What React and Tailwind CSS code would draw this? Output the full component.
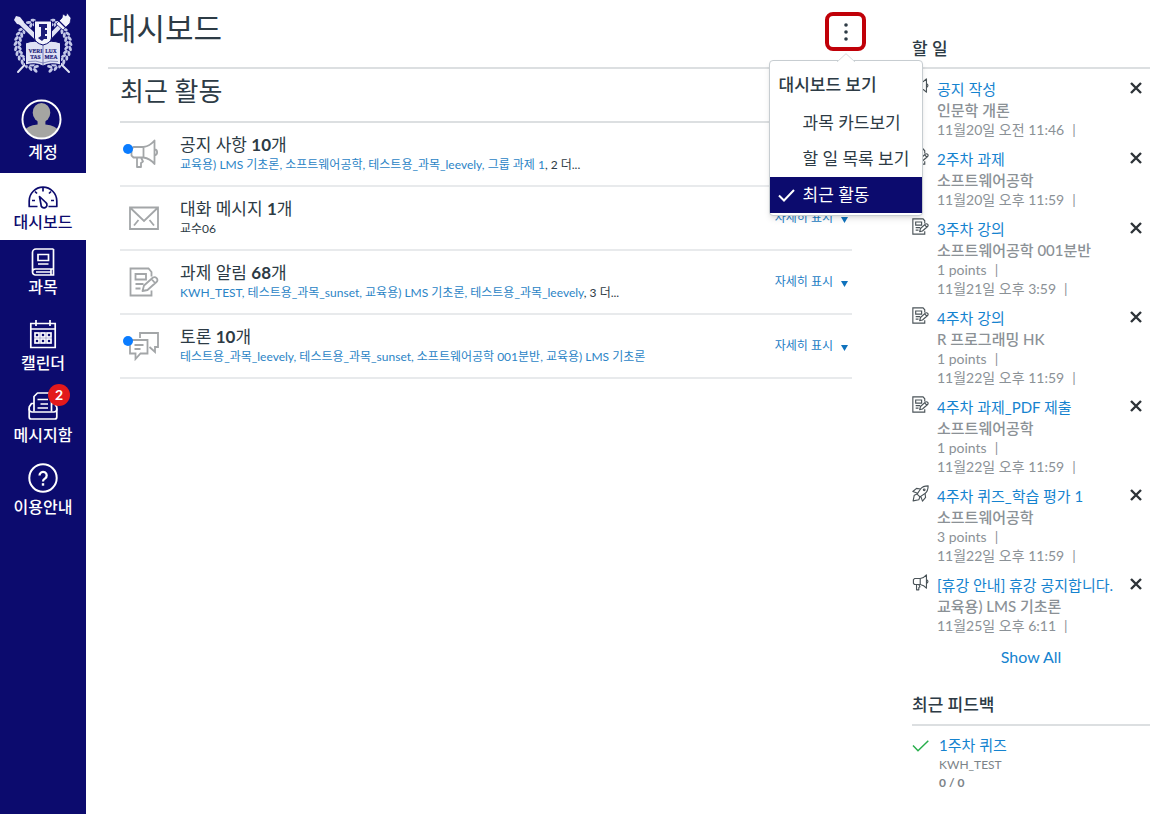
import { useState } from "react";

const navItem = "flex flex-col items-center text-base leading-5 font-medium";

function Logo() {
  const leaves = [];
  for (let i = 0; i < 14; i++) {
    const deg = 104 + i * 11;
    const a = (deg * Math.PI) / 180;
    [1, -1].forEach((s) => {
      const x = 30 + s * Math.cos(a) * 25.5;
      const y = 32 + Math.sin(a) * 24.5;
      const r = s === 1 ? deg + 90 : -(deg + 90);
      leaves.push(
        <g key={i + "_" + s} transform={`translate(${x} ${y}) rotate(${r})`}>
          <ellipse cx="0" cy="-2.2" rx="2.8" ry="1.5" transform={`rotate(${s * 30})`} />
          <ellipse cx="0" cy="2.2" rx="2.8" ry="1.5" transform={`rotate(${s * -30})`} />
        </g>
      );
    });
  }
  return (
    <svg viewBox="0 0 60 62" className="h-[62px] w-[60px]" role="img" aria-label="서울대학교">
      <g fill="#c3c8e8">{leaves}</g>
      <g strokeLinecap="round">
        <path d="M7 9 L30 31 M50 10 L30 31" stroke="#0c0b6e" strokeWidth="6.500" />
        <path d="M7 9 L30 31 M50 10 L30 31" stroke="#dfe2f4" strokeWidth="4.500" />
        <path d="M16 47 L5 59 M44 47 L56 59" stroke="#dfe2f4" strokeWidth="2" />
      </g>
      <path d="M1 7 L3 3 L7 4 L11 9 L9 12 L4 11 Z" fill="#e6e8f7" />
      <path d="M43 11 L49 5 L50 1 L53 3 L54 0 L58 5 L57 10 L50 17 Z" fill="#f4f5fc" stroke="#0c0b6e" strokeWidth="0.7" />
      <path d="M46 8 L53 15" stroke="#0c0b6e" strokeWidth="1.200" />
      <path d="M12.500 30 Q22 26.500 30 30 Q38 26.500 47.500 30 V52 Q38 49 30 53 Q22 49 12.500 52 Z" fill="#dfe2f4" stroke="#0c0b6e" strokeWidth="1" />
      <path d="M15 48.500 Q23 47 30 50 Q37 47 45 48.500" fill="none" stroke="#7478b4" strokeWidth="0.8" />
      <path d="M30 31 V52" stroke="#5b5fa6" strokeWidth="0.8" />
      <g fontSize="5.500" fontWeight="700" fill="#23237c" stroke="#23237c" strokeWidth="0.2" fontFamily="Liberation Serif">
        <text x="22.500" y="39.500" textAnchor="middle">VERI</text>
        <text x="38" y="39.500" textAnchor="middle">LUX</text>
        <text x="22.500" y="45.500" textAnchor="middle">TAS</text>
        <text x="38" y="45.500" textAnchor="middle">MEA</text>
      </g>
      <path d="M21.500 8 H38.500 V25 Q38 30 30 32 Q22 30 21.500 25 Z" fill="#f3f4fc" stroke="#0c0b6e" strokeWidth="1" />
      <path d="M26 11 H34 V15 H32 V17 H34 V21 H32 V23 H34 V26 H31 L29 28 L25 25 L28 23 V14 H26 Z" fill="#1c1c78" />
    </svg>
  );
}

function DashboardIcon() {
  return (
    <svg viewBox="0 0 30 30" className="size-[30px]" fill="none" stroke="currentColor" strokeWidth="1.700" aria-hidden="true">
      <path d="M9.500 24.500 H1.200 V19 a13.800 13.800 0 0 1 27.600 0 V24.500 H20.500" strokeLinejoin="round" />
      <path d="M11.500 14.500 L17.800 20.500 a3 3 0 1 1 -4.800 2 Z" strokeLinejoin="round" />
      <path d="M15 6 V9.500 M7 9.500 L9 11.500 M23 9.500 L21 11.500 M4 18.500 H7 M26 18.500 H23" />
    </svg>
  );
}

function BookIcon() {
  return (
    <svg viewBox="0 0 30 30" className="size-[30px]" fill="none" stroke="currentColor" strokeWidth="1.700" aria-hidden="true">
      <path d="M25.500 2 H8 a3.500 3.500 0 0 0 -3.500 3.500 V25 a3 3 0 0 0 3 3 H25.500 V22 H7.500 a3 3 0 0 0 -3 3 M25.500 2 V22 M23 22 V28 M8 25 H23" />
      <path d="M10 7.500 H20.500 V13.500 H10 Z M10 17 H20.500" />
    </svg>
  );
}

function CalendarIcon() {
  const cells = [];
  [14, 20].forEach((y) => [7, 13, 19].forEach((x) => cells.push(<rect key={x + "-" + y} x={x} y={y} width="4" height="4" />)));
  return (
    <svg viewBox="0 0 30 30" className="size-[30px]" fill="none" stroke="currentColor" strokeWidth="1.700" aria-hidden="true">
      <path d="M2.800 4.500 H27.200 V28.500 H2.800 Z M2.800 10 H27.200 M8 1 V7 M22 1 V7" />
      {cells}
    </svg>
  );
}

function InboxIcon() {
  return (
    <svg viewBox="0 0 30 30" className="size-[30px]" fill="none" stroke="currentColor" strokeWidth="1.700" strokeLinejoin="round" aria-hidden="true">
      <path d="M6 20.500 V5.500 L9.500 2 H23.500 V20.500" />
      <path d="M9.500 8.500 H20 M12.500 13 H20 M9.500 17 H20" />
      <path d="M6 12.500 H3.500 L1.200 16 V26 a2 2 0 0 0 2 2 H26.800 a2 2 0 0 0 2 -2 V16 L26.500 12.500 H24" />
      <path d="M1.200 17.500 a3 3 0 0 0 3 3.500 H25.800 a3 3 0 0 0 3 -3.500" />
    </svg>
  );
}

function HelpIcon() {
  return (
    <svg viewBox="0 0 30 30" className="size-[30px]" fill="none" stroke="currentColor" strokeWidth="2" aria-hidden="true">
      <circle cx="15" cy="15" r="13.700" />
      <path d="M11.500 12.500 a3.600 3.600 0 1 1 5.500 3 q-2 1 -2 3" strokeWidth="2.300" />
      <path d="M15 20.200 V22.700" strokeWidth="2.400" />
    </svg>
  );
}

function MegaphoneIcon({ className }) {
  return (
    <svg viewBox="0 0 30 30" className={className} fill="none" stroke="currentColor" aria-hidden="true">
      <path d="M4.500 8 H14.500 V18.500 H4.500 L2.500 16.500 V10 Z M14.500 8 Q21 7 25.500 1.500 V25 Q21 19.500 14.500 18.500 M25.500 10.200 a3.200 3.200 0 0 1 0 6.300 M8 18.500 V28 H12 V24 L14 22.500 L12 18.500" strokeLinejoin="round" />
    </svg>
  );
}

function AssignmentIcon({ className }) {
  return (
    <svg viewBox="0 0 30 30" className={className} fill="none" stroke="currentColor" aria-hidden="true">
      <path d="M22.500 9.500 V5 L19.500 1.500 H1.500 V28.500 H22.500 V23.500" />
      <path d="M6.500 7 H17 V12.500 H6.500 Z M6.500 17 H14.500 M6.500 21.500 H11.500" />
      <path d="M13.500 24 L15 18.500 L24 10.500 Q26 9.500 27.800 11.300 Q29.200 13.500 27.500 15 L18.500 23 Z M22.500 12 L26 16" strokeLinejoin="round" />
    </svg>
  );
}

function MailIcon({ className }) {
  return (
    <svg viewBox="0 0 30 30" className={className} fill="none" stroke="currentColor" aria-hidden="true">
      <path d="M1 4.500 H29 V26 H1 Z M1.500 5 L15 18 L28.500 5 M5 22.500 L9.500 17 M25 22.500 L20.500 17" />
    </svg>
  );
}

function DiscussionIcon({ className }) {
  return (
    <svg viewBox="0 0 30 30" className={className} fill="none" stroke="currentColor" aria-hidden="true">
      <path d="M11 7 V2 H29 V16 H26 V21 L20.500 16" />
      <path d="M1 9 H18.500 V22.500 H11.500 L6.500 28 V22.500 H1 Z M5.500 14 H14.500 M5.500 18 H11.500" />
    </svg>
  );
}

function RocketIcon({ className }) {
  return (
    <svg viewBox="0 0 30 30" className={className} fill="none" stroke="currentColor" strokeLinejoin="round" aria-hidden="true">
      <path d="M28.500 1.500 Q19 1.500 15 7 L9 16 L14 21 L23 15 Q28.500 11 28.500 1.500 Z" />
      <path d="M15 7 L8 6 L1.500 11.500 L10 14.500 M23 15 L24 22 L18.500 28.500 L15.500 20 M9 16 L4 18 L2 28 L12 26 L14 21" />
      <circle cx="21.500" cy="8.500" r="1.500" />
    </svg>
  );
}

const activities = [
  { title: "공지 사항", count: "10", icon: MegaphoneIcon, unread: true, links: ["교육용) LMS 기초론", "소프트웨어공학", "테스트용_과목_leevely", "그룹 과제 1"], more: "2 더..." },
  { title: "대화 메시지", count: "1", icon: MailIcon, text: "교수06" },
  { title: "과제 알림", count: "68", icon: AssignmentIcon, links: ["KWH_TEST", "테스트용_과목_sunset", "교육용) LMS 기초론", "테스트용_과목_leevely"], more: "3 더..." },
  { title: "토론", count: "10", icon: DiscussionIcon, unread: true, links: ["테스트용_과목_leevely", "테스트용_과목_sunset", "소프트웨어공학 001분반", "교육용) LMS 기초론"] },
];

const todos = [
  { icon: MegaphoneIcon, title: "공지 작성", course: "인문학 개론", date: "11월20일 오전 11:46" },
  { icon: AssignmentIcon, title: "2주차 과제", course: "소프트웨어공학", date: "11월20일 오후 11:59" },
  { icon: AssignmentIcon, title: "3주차 강의", course: "소프트웨어공학 001분반", points: "1 points", date: "11월21일 오후 3:59" },
  { icon: AssignmentIcon, title: "4주차 강의", course: "R 프로그래밍 HK", points: "1 points", date: "11월22일 오후 11:59" },
  { icon: AssignmentIcon, title: "4주차 과제_PDF 제출", course: "소프트웨어공학", points: "1 points", date: "11월22일 오후 11:59" },
  { icon: RocketIcon, title: "4주차 퀴즈_학습 평가 1", course: "소프트웨어공학", points: "3 points", date: "11월22일 오후 11:59" },
  { icon: MegaphoneIcon, title: "[휴강 안내] 휴강 공지합니다.", course: "교육용) LMS 기초론", date: "11월25일 오후 6:11" },
];

const views = ["과목 카드보기", "할 일 목록 보기", "최근 활동"];

function Sidebar() {
  return (
    <nav aria-label="전체 메뉴" className="flex w-[86px] shrink-0 flex-col bg-[#0c0b6e] text-white">
      <a href="#home" className="flex justify-center pt-[13px] pb-6">
        <Logo />
      </a>
      <a href="#account" className={`${navItem} pb-[11px]`}>
        <svg viewBox="0 0 42 42" className="mr-1 mb-0.5 size-[41px]" aria-hidden="true">
          <clipPath id="avatar"><circle cx="21" cy="21" r="19" /></clipPath>
          <g clipPath="url(#avatar)" fill="#a5a5a2">
            <ellipse cx="21" cy="14" rx="9" ry="10" />
            <path d="M17 21 H25 V26 Q36 27 39 33 V42 H3 V33 Q6 27 17 26 Z" />
          </g>
          <circle cx="21" cy="21" r="19.500" fill="none" stroke="#fff" strokeWidth="2" />
        </svg>
        계정
      </a>
      <a href="#dashboard" aria-current="page" className={`${navItem} bg-white pt-[9px] pb-2 text-[#0c0b6e]`}>
        <DashboardIcon />
        대시보드
      </a>
      <a href="#courses" className={`${navItem} pt-[7px] pb-[15px]`}>
        <BookIcon />
        과목
      </a>
      <a href="#calendar" className={`${navItem} gap-1 pt-[7px] pb-[11px]`}>
        <CalendarIcon />
        캘린더
      </a>
      <a href="#inbox" className={`${navItem} gap-1 pt-[7px] pb-[11px]`}>
        <span className="relative">
          <InboxIcon />
          <span className="absolute -top-[7px] left-5 flex size-[22px] items-center justify-center rounded-full bg-[#e3191b] text-sm font-bold">2</span>
        </span>
        메시지함
      </a>
      <a href="#help" className={`${navItem} gap-1 pt-[7px] pb-[11px]`}>
        <HelpIcon />
        이용안내
      </a>
    </nav>
  );
}

function ViewMenu() {
  const [selected, setSelected] = useState("최근 활동");
  return (
    <div className="relative">
      <button type="button" aria-label="대시보드 옵션" aria-expanded="true" className="flex h-[39px] w-[41px] items-center justify-center rounded-lg border-4 border-[#c00008] bg-white">
        <svg viewBox="0 0 4 18" className="h-[18px] w-1" fill="#2d3b45" aria-hidden="true">
          <circle cx="2" cy="2" r="1.800" />
          <circle cx="2" cy="9" r="1.800" />
          <circle cx="2" cy="16" r="1.800" />
        </svg>
      </button>
      <div role="menu" className="absolute top-12 left-1/2 z-10 w-[154px] -translate-x-1/2 rounded-sm border border-[#c7cdd1] bg-white pt-2 pb-0.5 text-[17px] text-[#2d3b45] shadow-md">
        <svg viewBox="0 0 18 9" className="absolute -top-2 left-1/2 h-[9px] w-[18px] -translate-x-1/2" aria-hidden="true">
          <path d="M0 9 L9 0.700 L18 9" fill="#fff" stroke="#d5dadd" />
        </svg>
        <div className="mb-1 px-[9px] leading-8 font-medium">대시보드 보기</div>
        {views.map((v) => (
          <button
            key={v}
            type="button"
            role="menuitemradio"
            aria-checked={v === selected}
            onClick={() => setSelected(v)}
            className={`flex h-9 w-full items-center pl-2 text-left whitespace-nowrap ${v === selected ? "bg-[#0c0b6e] text-white" : ""}`}
          >
            <span className="w-[25px] shrink-0">
              {v === selected && (
                <svg viewBox="0 0 17 13" className="h-[13px] w-[17px]" fill="none" stroke="currentColor" strokeWidth="2" aria-hidden="true">
                  <path d="M1 6.500 L6 11.500 L16 1" />
                </svg>
              )}
            </span>
            {v}
          </button>
        ))}
      </div>
    </div>
  );
}

function Activity({ item }) {
  const Icon = item.icon;
  return (
    <li className="flex h-16 items-center border-b-2 border-[#e8eaec]">
      <div className="relative ml-[9px] w-[51px] shrink-0">
        <Icon className="size-[30px] stroke-[1.8] text-[#a3a6a8]" />
        {item.unread && <span className="absolute top-[5px] -left-[6px] size-[10px] rounded-full bg-[#0a7cff]" />}
      </div>
      <div className="min-w-0 flex-1 pt-0.5">
        <h3 className="text-[17px] leading-5">
          {item.title} <span className="font-bold">{item.count}</span>개
        </h3>
        <p className="truncate text-xs leading-5">
          {item.text}
          {item.links?.map((l, i) => (
            <span key={l} className="text-[#2b84c6]">
              {i > 0 && ", "}
              <a href="#course">{l}</a>
            </span>
          ))}
          {item.more && <span>, {item.more}</span>}
        </p>
      </div>
      <button type="button" className="mr-1 flex shrink-0 items-center gap-2 text-xs text-[#1b7cc4]">
        자세히 표시
        <svg viewBox="0 0 7 6" className="mt-1 h-[6px] w-[7px]" fill="#0f72bd" aria-hidden="true">
          <path d="M0 0 H7 L3.500 6 Z" />
        </svg>
      </button>
    </li>
  );
}

function Todo({ item }) {
  const Icon = item.icon;
  return (
    <li className="flex items-start">
      <Icon className="size-[17px] shrink-0 stroke-2 text-[#4b5459]" />
      <div className="ml-2 min-w-0 flex-1 text-sm leading-[19px] text-[#8b9196]">
        <a href="#todo" className="block text-[15px] leading-[22px] whitespace-nowrap text-[#1583cf]">{item.title}</a>
        <p className="text-[15px] leading-5 font-medium whitespace-nowrap">{item.course}</p>
        {item.points && <p>{item.points}<span className="ml-2">|</span></p>}
        <p>{item.date}<span className="ml-2">|</span></p>
      </div>
      <button type="button" aria-label={`${item.title} 무시`} className="mt-1 mr-2 shrink-0">
        <svg viewBox="0 0 12 12" className="size-3" stroke="#2d3338" strokeWidth="2.400" aria-hidden="true">
          <path d="M1 1 L11 11 M11 1 L1 11" />
        </svg>
      </button>
    </li>
  );
}

export default function App() {
  return (
    <div className="flex min-h-screen bg-white font-['Lato','Noto_Sans_CJK_KR',sans-serif] text-[#2d3b45]">
      <Sidebar />
      <div className="flex min-w-0 flex-1 gap-[46px] pr-[18px] pl-[22px]">
        <main className="min-w-0 flex-1">
          <header className="flex h-[69px] items-start justify-between border-b-2 border-[#dcdfe1] pt-3">
            <h1 className="text-[31px] leading-8">대시보드</h1>
            <ViewMenu />
          </header>
          <section className="mr-[14px] ml-3">
            <h2 className="border-b-2 border-[#dcdfe1] pt-1 pb-3 text-[26px] leading-9">최근 활동</h2>
            <ul>
              {activities.map((a) => <Activity key={a.title} item={a} />)}
            </ul>
          </section>
        </main>
        <aside className="w-[238px] shrink-0">
          <h2 className="border-b-2 border-[#dcdfe1] pt-[37px] pb-1.5 text-[17px] leading-6 font-medium">할 일</h2>
          <ul className="flex flex-col gap-[9px] pt-[9px]">
            {todos.map((t) => <Todo key={t.title} item={t} />)}
          </ul>
          <p className="mt-[10px] text-center leading-6">
            <a href="#all" className="text-[#1583cf]">Show All</a>
          </p>
          <h2 className="mt-6 border-b-2 border-[#dcdfe1] pb-[7px] text-[17px] leading-6 font-medium">최근 피드백</h2>
          <div className="flex items-start pt-2">
            <svg viewBox="0 0 17 12" className="mt-[6px] h-3 w-[17px] shrink-0" fill="none" stroke="#27ae4b" strokeWidth="1.500" aria-hidden="true">
              <path d="M1 5.500 L6 10.700 L16.300 0.800" />
            </svg>
            <div className="ml-[10px] text-xs leading-[18px] text-[#7c8388]">
              <a href="#feedback" className="block text-[15px] leading-[22px] text-[#1583cf]">1주차 퀴즈</a>
              <p>KWH_TEST</p>
              <p className="font-bold">0 / 0</p>
            </div>
          </div>
        </aside>
      </div>
    </div>
  );
}
